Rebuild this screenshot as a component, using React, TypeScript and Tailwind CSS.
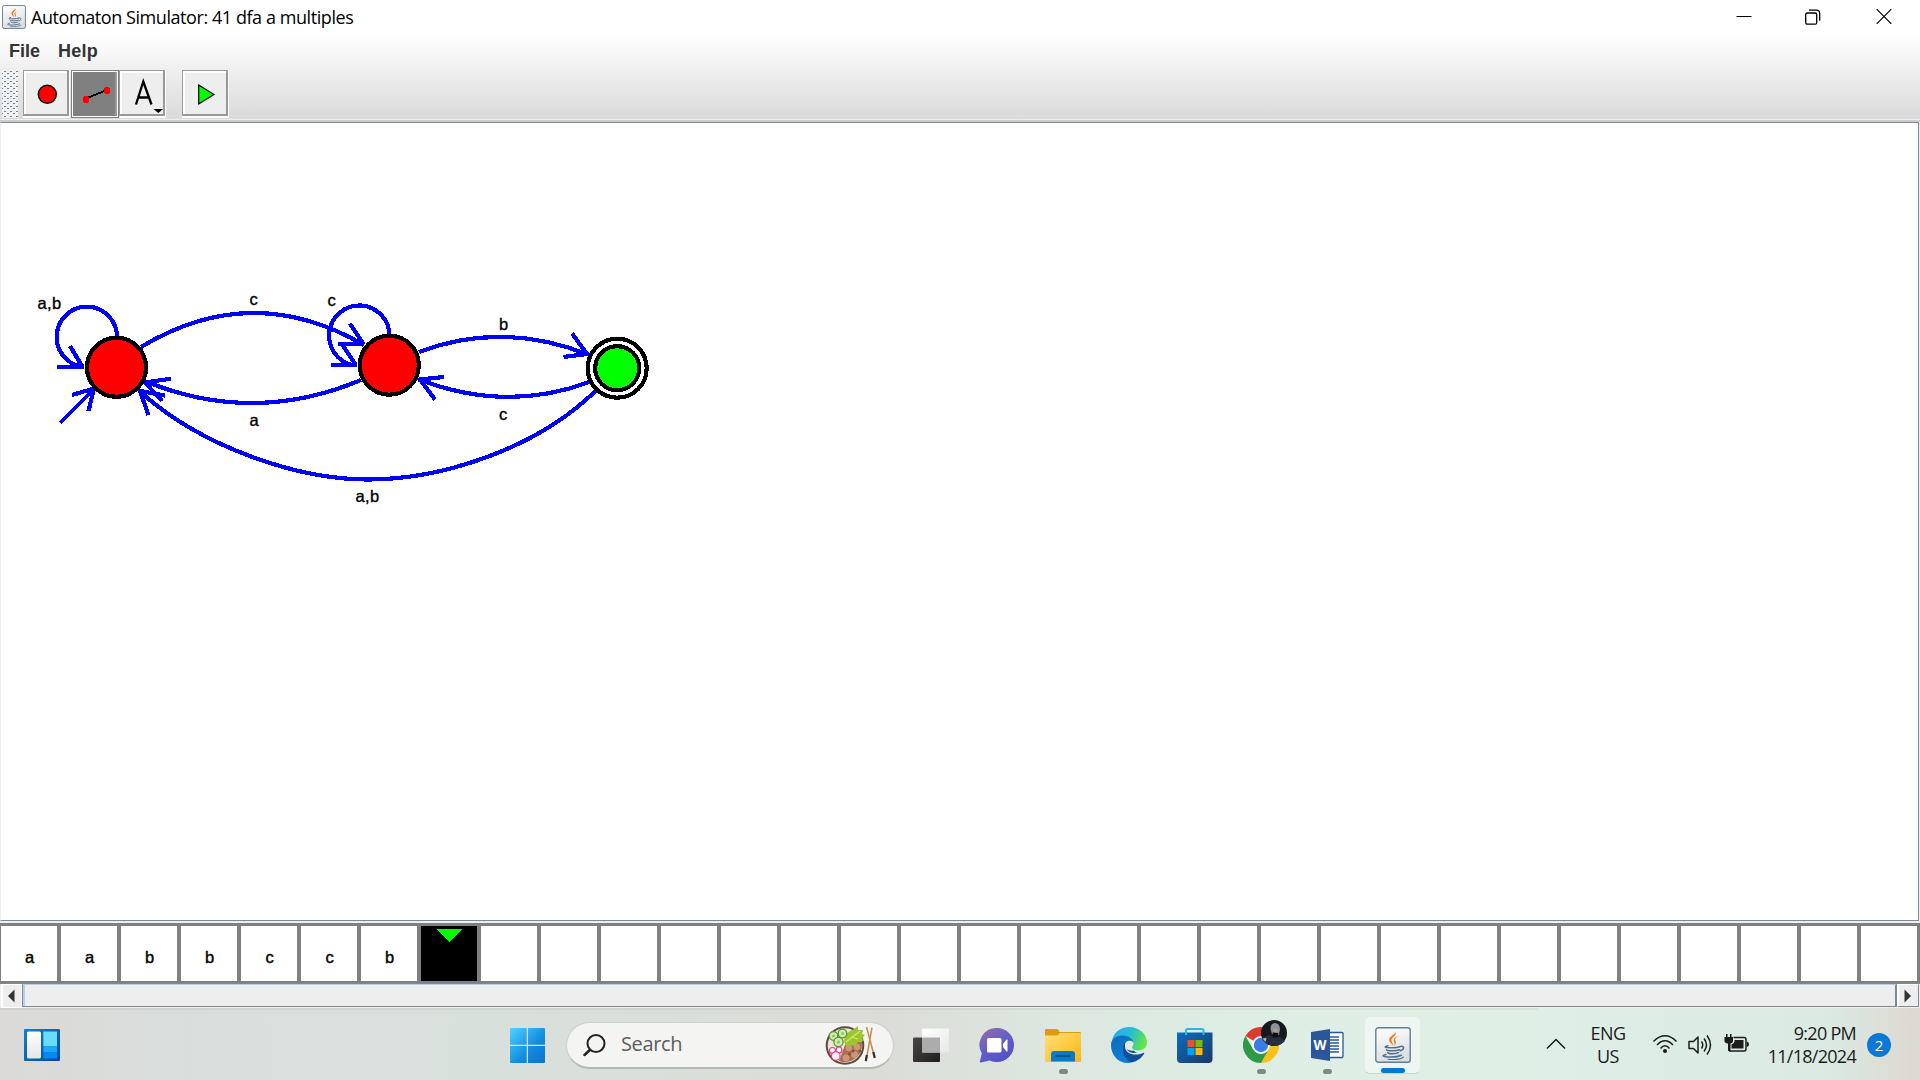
import React from "react";

const INK = "#0000ff";

function JavaCup({ className }: { className: string }) {
  return (
    <svg className={className} viewBox="0 0 36 36">
      <defs>
        <linearGradient id="javaBg" x1="0" y1="0" x2="0.3" y2="1">
          <stop offset="0" stopColor="#ffffff" />
          <stop offset="1" stopColor="#dcdee0" />
        </linearGradient>
      </defs>
      <rect x="0.8" y="0.8" width="34.4" height="34.4" rx="2.5" fill="url(#javaBg)" stroke="#5f7f96" strokeWidth="1.4" />
      <path d="M20.500 3.500c1.800 3.600-6.600 5.600-6.400 9.400.1 2.300 2.800 3.600 4.200 6.200-.4-3-1.900-4-1.800-6 .2-3.200 6-4.400 4-9.600z" fill="#ee7a1c" />
      <path d="M23.500 8.800c-3 1.200-5.200 2.800-4.800 4.800.3 1.600 1.700 2.400 .3 5 3-2.400 2-3.800 1.300-5.100-.8-1.600.8-3.200 3.200-4.700z" fill="#ee7a1c" />
      <g fill="none" stroke="#527089" strokeWidth="1.5" strokeLinecap="round">
        <path d="M13 18.800c-6 1.400-1.500 2.100 4.800 1.900 3-.1 5-.4 7-1" />
        <path d="M11.500 22.500c-.5 1.600 10 1.700 13.200.2" />
        <path d="M12.800 25.500c.3 1.700 8.500 1.500 10.700.2" />
        <path d="M11 27.400c-10 2.600 8.500 4 15.300.9" />
        <path d="M25 19.600c4.400-1.300 5 2.700.4 4.300" />
        <path d="M13 32.200c6 .6 12.500.1 15.200-2" strokeWidth="1.1" />
      </g>
    </svg>
  );
}

function TitleBar() {
  return (
    <div className="flex h-[34px] shrink-0 items-center bg-white">
      <JavaCup className="ml-[2px] h-[24px] w-[24px]" />
      <span className="ml-[5px] text-[18px] tracking-[-0.43px] text-black">Automaton Simulator: 41 dfa a multiples</span>
      <div className="ml-auto flex items-center pr-[28px]">
        <svg className="mr-[53px] h-[16px] w-[16px]" viewBox="0 0 16 16"><path d="M0.500 7.500H15.500" stroke="#000" strokeWidth="1" /></svg>
        <svg className="mr-[55px] h-[16px] w-[16px]" viewBox="0 0 16 16" fill="none" stroke="#000" strokeWidth="1.3">
          <rect x="0.7" y="4" width="11" height="11.2" rx="1.5" />
          <path d="M4 1.200h7.500q3.200 0 3.200 3.200v7.400" />
        </svg>
        <svg className="h-[16px] w-[16px]" viewBox="0 0 16 16"><path d="M0.700 0.200L15.300 14.800M15.300 0.200L0.700 14.800" stroke="#000" strokeWidth="1.2" /></svg>
      </div>
    </div>
  );
}

function ToolButton({ children }: { children: React.ReactNode }) {
  return (
    <div className="h-[48px] w-[47px] border-b-2 border-r-2 border-[#fbfbfb]">
      <div className="flex h-[46px] w-[46px] border border-b-2 border-r-2 border-[#999999] bg-[#eeeeee] shadow-[inset_2px_2px_0_#ffffff]">{children}</div>
    </div>
  );
}

function Toolbar() {
  return (
    <div className="flex h-[85px] shrink-0 flex-col bg-linear-to-b from-white to-[#dadada]">
      <div className="flex h-[36px] gap-[18px] pl-[9px] pt-[4px] font-['Liberation_Sans',sans-serif] text-[18px] font-bold leading-[27px] text-[#333333]">
        <span>File</span>
        <span className="tracking-[0.25px]">Help</span>
      </div>
      <div className="flex h-[48px] pl-[2px]">
        <svg className="h-[48px] w-[16px]" shapeRendering="crispEdges">
          <defs>
            <pattern id="grip" width="6" height="5" patternUnits="userSpaceOnUse">
              <rect width="6" height="5" fill="#f0f1f2" />
              <path d="M2 1h2v1h-2zM5 3h1v1h-1zM0 3h1v1h-1z" fill="#6f8396" />
              <path d="M3 2h1v1h-1zM1 4h1v1h-1z" fill="#ffffff" />
            </pattern>
          </defs>
          <rect width="16" height="48" fill="url(#grip)" />
        </svg>
        <div className="ml-[5px]">
          <ToolButton>
            <svg className="h-[43px] w-[43px]" viewBox="24 71 43 43"><circle cx="47.3" cy="94.3" r="9" fill="#f00" stroke="#000" strokeWidth="1.4" /></svg>
          </ToolButton>
        </div>
        <div className="ml-px h-[48px] w-[48px] border border-[#808080] bg-[#808080] shadow-[inset_1px_1px_0_#fff,inset_-1px_-1px_0_#fff]">
          <svg className="h-[46px] w-[46px]" viewBox="72 71 46 46" shapeRendering="crispEdges">
            <path d="M116 72V116" stroke="#999" strokeWidth="2" />
            <path d="M87 98L107 90" stroke="#000" strokeWidth="1.7" />
            <path d="M84 96h4v1h1v5h-1v1h-4v-1h-1v-5h1zM105 87h4v1h1v5h-1v1h-4v-1h-1v-5h1z" fill="#f00" />
          </svg>
        </div>
        <ToolButton>
          <svg className="h-[43px] w-[43px]" viewBox="120 71 43 43">
            <path d="M136 104.500L143.300 81.500L151.500 104.500M138.500 97.500H149" fill="none" stroke="#000" strokeWidth="2.3" />
            <path d="M153.500 109h9.500l-4.700 4z" fill="#000" />
          </svg>
        </ToolButton>
        <div className="ml-[16px]">
          <ToolButton>
            <svg className="h-[43px] w-[43px]" viewBox="183 71 43 43"><path d="M198.700 85L214 94.500L198.700 104z" fill="#0f0" stroke="#000" strokeWidth="1.2" /></svg>
          </ToolButton>
        </div>
      </div>
    </div>
  );
}

const edges = [
  "M117 337A30.2 30.2 0 1 0 81 366.5",
  "M57 367H84M70 346L82 366",
  "M60 423L94 389M72 395L94 388.5L88.5 411",
  "M141 347Q252 280 364 345",
  "M338 344H364M350 323.5L363 343.5",
  "M389.500 335A30.2 30.2 0 1 0 352 365",
  "M331 365H357M342 344L355 364",
  "M361 380Q254 425 147 382",
  "M171 378.7L145 382.5L162 401",
  "M595.500 391C535 450 440 479.500 368 479.500S200 446 140 391.500",
  "M165 395.5L140 391L148.5 415",
  "M419 352Q502 320.5 588 354.5",
  "M572 333.5L587 354L563.5 357",
  "M589 382Q507 413 419 379.5",
  "M444 377L420 379.5L435 399.5",
];

const labels: [string, number, number][] = [
  ["a,b", 37.5, 308.500],
  ["c", 249.5, 305],
  ["c", 327.5, 306],
  ["b", 499, 329.5],
  ["a", 249.5, 425.5],
  ["c", 499, 419.5],
  ["a,b", 355.500, 501.5],
];

function Diagram() {
  return (
    <div className="mr-px h-[799px] shrink-0 border border-b-[#7a8a99] border-l-[#eeeeee] border-r-[#7a8a99] border-t-[#7a8a99] bg-white">
      <svg className="h-[797px] w-[700px]" viewBox="1 123 700 797">
        <g shapeRendering="crispEdges">
          <g fill="none" stroke={INK} strokeWidth="4.2">
            {edges.map((d) => <path key={d} d={d} />)}
          </g>
          <g stroke="#000" strokeWidth="4.2">
            <circle cx="116.5" cy="367.3" r="29.5" fill="#f00" />
            <circle cx="389.3" cy="365.2" r="29.5" fill="#f00" />
            <circle cx="617.2" cy="368.2" r="29.5" fill="#fff" />
            <circle cx="617.2" cy="368.2" r="22" fill="#0f0" />
          </g>
        </g>
        <g fontFamily="Liberation Sans, sans-serif" fontSize="16.5" fill="#000" stroke="#000" strokeWidth="0.35">
          {labels.map(([t, x, y]) => <text key={`${x}-${y}`} x={x} y={y} letterSpacing={t.length > 1 ? 0.4 : 0}>{t}</text>)}
        </g>
      </svg>
    </div>
  );
}

const tape = ["a", "a", "b", "b", "c", "c", "b"];

function Tape() {
  return (
    <div className="flex h-[60px] shrink-0 gap-[4px] overflow-hidden bg-[#808080] pb-[2px] pl-px pt-[3px]">
      {Array.from({ length: 32 }, (_, i) => (
        <div key={i} className={`flex h-[55px] w-[56px] shrink-0 justify-center ${i === 7 ? "bg-black" : "bg-white"}`}>
          {i === 7 ? (
            <svg className="mt-[3px] h-[13px] w-[25px]" viewBox="0 0 25 13" shapeRendering="crispEdges"><path d="M0 0h25L12.500 13z" fill="#0f0" /></svg>
          ) : (
            <span className="pl-px pt-[22px] font-['Liberation_Sans',sans-serif] text-[16.5px] leading-[19px] text-black [-webkit-text-stroke:0.4px_black]">{tape[i]}</span>
          )}
        </div>
      ))}
    </div>
  );
}

function ScrollBar() {
  return (
    <div className="flex h-[25px] shrink-0 border-t border-[#7a8a99] bg-[#eeeeee] pr-px">
      <div className="ml-px flex h-[24px] w-[21px] items-center border border-white border-l-2 pl-[5px]">
        <svg className="h-[14px] w-[7px]" viewBox="0 0 7 14"><path d="M6.500 0.500v13L0 7z" fill="#333" /></svg>
      </div>
      <div className="mb-px h-[23px] grow border-b border-l border-r-2 border-t border-b-[#7a8a99] border-l-[#7a8a99] border-r-[#7a8a99] border-t-[#b8cfe5]">
        <div className="h-full w-[2px] bg-[#b8cfe5]" />
      </div>
      <div className="flex h-[23px] w-[22px] items-center border-b border-l-2 border-r border-t border-b-[#7a8a99] border-l-white border-r-[#7a8a99] border-t-white pl-[5px]">
        <svg className="h-[14px] w-[7px]" viewBox="0 0 7 14"><path d="M0.500 0.500v13L7 7z" fill="#333" /></svg>
      </div>
    </div>
  );
}

function WidgetsIcon() {
  return (
    <svg className="h-[34px] w-[36px]" viewBox="0 0 36 34">
      <defs>
        <linearGradient id="wd" x1="0" y1="0" x2="1" y2="1"><stop offset="0" stopColor="#0a82d8" /><stop offset="1" stopColor="#0e4790" /></linearGradient>
        <linearGradient id="ww" x1="0" y1="0" x2="0" y2="1"><stop offset="0" stopColor="#fff" /><stop offset="1" stopColor="#e6e6e6" /></linearGradient>
      </defs>
      <rect y="1" width="36" height="32" rx="1" fill="url(#wd)" />
      <rect x="3" y="3.5" width="14" height="27" rx="1.5" fill="url(#ww)" />
      <path d="M19.300 3.500h13.700v14.500h-13.700z" fill="#69dbff" />
      <path d="M19.300 18h13.700v6h-13.700z" fill="#1aa7f8" />
      <path d="M19.300 24h13.700v6.500h-13.700z" fill="#0589ee" />
    </svg>
  );
}

function StartIcon() {
  return (
    <svg className="h-[35px] w-[35px]" viewBox="0 0 35 35">
      <defs><linearGradient id="win" x1="0" y1="0" x2="1" y2="1"><stop offset="0" stopColor="#4fd3ff" /><stop offset="0.6" stopColor="#108ce0" /><stop offset="1" stopColor="#0a73cf" /></linearGradient></defs>
      <path d="M1 0h15.700v16.700H0V1q0-1 1-1zM18 0h16q1 0 1 1v15.700H18zM0 18h16.700v17H1q-1 0-1-1zM18 18h17v16q0 1-1 1H18z" fill="url(#win)" />
    </svg>
  );
}

function FoodIcon() {
  return (
    <svg className="h-[40px] w-[52px]" viewBox="0 0 52 40">
      <circle cx="20" cy="20.5" r="19.3" fill="#5c4a42" />
      <circle cx="20" cy="20.5" r="17.3" fill="#efe6da" />
      <path d="M20 20q8-6 17-3 1 12-9 18-8 4-14 1z" fill="#a9714f" />
      <g fill="#cc9777"><circle cx="24" cy="23" r="3.3" /><circle cx="32" cy="22" r="3.2" /><circle cx="29.500" cy="29.500" r="3.4" /><circle cx="21" cy="33" r="3.4" /></g>
      <g fill="#8d563d"><circle cx="28" cy="26" r="1.6" /><circle cx="24.500" cy="29" r="1.8" /><circle cx="35" cy="26" r="1.5" /></g>
      <path d="M19 16q0-6 6-10 4-1 8-5l0 4 5 0-1 4 3 1-3 3 2 3-6 1-3 4-5-1-4 1z" fill="#9dc52d" />
      <path d="M21 17L35 6M26 12l7 2" stroke="#d2e574" strokeWidth="1.2" />
      <g fill="#d5ebac" stroke="#4c9a2e" strokeWidth="1.3"><circle cx="8.5" cy="11" r="4.3" /><circle cx="17.5" cy="8.5" r="4.3" /><circle cx="13.5" cy="17" r="4.6" /></g>
      <g fill="#8fc46a"><circle cx="8.5" cy="11" r="1.5" /><circle cx="17.5" cy="8.5" r="1.5" /><circle cx="13.5" cy="17" r="1.6" /></g>
      <g fill="#fff2f7" stroke="#ec357c" strokeWidth="1.1"><circle cx="7.5" cy="25.5" r="3" /><circle cx="14" cy="25" r="3" /><circle cx="10.8" cy="31" r="4.3" /></g>
      <path d="M41.500 2L49.500 32M47 2.500L41 36" stroke="#c58c4c" strokeWidth="1.5" />
      <path d="M48.300 27l1.500 6M41.800 30l-1 6" stroke="#3c2c22" strokeWidth="2.2" />
    </svg>
  );
}

function SearchBox() {
  return (
    <div className="ml-[21px] flex h-[47px] w-[328px] items-center rounded-full border border-[#c9cfcb] border-b-2 border-b-[#b3bab6] bg-[#f4f4f2]">
      <svg className="ml-[16px] h-[24px] w-[24px]" viewBox="0 0 24 24" fill="none" stroke="#222" strokeLinecap="round"><circle cx="13" cy="10.5" r="8.5" strokeWidth="2" /><path d="M6.800 17L1.500 22" strokeWidth="2.5" /></svg>
      <span className="ml-[14px] pb-px text-[20px] tracking-[-0.35px] text-[#5c5c5c]">Search</span>
      <div className="ml-auto mr-[16px]"><FoodIcon /></div>
    </div>
  );
}

function TaskSlot({ children, dot }: { children: React.ReactNode; dot?: boolean }) {
  return (
    <div className="flex h-[48px] w-[66px] shrink-0 flex-col items-center">
      <div className="flex h-[36px] items-center">{children}</div>
      {dot && <div className="mt-[6px] h-[5px] w-[9px] rounded-full bg-[#7f8983]" />}
    </div>
  );
}

function TaskView() {
  return (
    <svg className="h-[36px] w-[36px]" viewBox="0 0 36 36">
      <defs>
        <linearGradient id="tv" x1="0" y1="0" x2="1" y2="1"><stop offset="0" stopColor="#494745" /><stop offset="1" stopColor="#1f1e1e" /></linearGradient>
        <linearGradient id="tw" x1="0" y1="0" x2="1" y2="1"><stop offset="0" stopColor="#ffffff" /><stop offset="1" stopColor="#e8e8e8" /></linearGradient>
      </defs>
      <rect x="0" y="10.5" width="27" height="24.5" rx="1" fill="url(#tv)" />
      <rect x="9" y="1.5" width="27" height="24" rx="1" fill="url(#tw)" />
      <path d="M9 10.500h18v15H9z" fill="#acacac" />
    </svg>
  );
}

function ChatIcon() {
  return (
    <svg className="h-[36px] w-[36px]" viewBox="0 0 36 36">
      <defs><linearGradient id="chat" x1="0" y1="0" x2="0.6" y2="1"><stop offset="0" stopColor="#9b6aa8" /><stop offset="0.5" stopColor="#6462c4" /><stop offset="1" stopColor="#5450cc" /></linearGradient></defs>
      <path d="M18 1a17 17 0 0 1 0 34q-4 0-7.500-1.500L2 35.500q-1.500 0-1-1.500l1.800-7.500A17 17 0 0 1 18 1z" fill="url(#chat)" />
      <rect x="8" y="11" width="14.5" height="14.5" rx="1.5" fill="#fff" />
      <path d="M24 17l3.500-4.500h1v12h-1L24 20z" fill="#fff" />
    </svg>
  );
}

function FolderIcon() {
  return (
    <svg className="h-[36px] w-[36px]" viewBox="0 0 36 36">
      <defs><linearGradient id="fold" x1="0" y1="0" x2="1" y2="1"><stop offset="0" stopColor="#ffdf79" /><stop offset="1" stopColor="#fbb612" /></linearGradient></defs>
      <path d="M0 3q0-1 1-1h11q1.500 0 2.500 3H35q1 0 1 1v5H0z" fill="#dc9c10" />
      <path d="M0 8.500h11q2 0 4-2.500h20q1 0 1 1v27q0 1-1 1H1q-1 0-1-1z" fill="url(#fold)" />
      <path d="M6 34.500V27q0-3 3-3h18q3 0 3 3v7.500z" fill="#087ac9" />
      <path d="M11 29h14" stroke="#07518f" strokeWidth="2" strokeLinecap="round" />
    </svg>
  );
}

function EdgeIcon() {
  return (
    <svg className="h-[36px] w-[36px]" viewBox="0 0 36 36">
      <defs>
        <linearGradient id="eg" x1="0" y1="0.2" x2="1" y2="0.5"><stop offset="0" stopColor="#2ba9ed" /><stop offset="0.5" stopColor="#26bdd6" /><stop offset="1" stopColor="#63e63f" /></linearGradient>
        <linearGradient id="eb" x1="0" y1="0" x2="0.5" y2="1"><stop offset="0" stopColor="#0c6cb7" /><stop offset="1" stopColor="#0f7fdc" /></linearGradient>
      </defs>
      <path d="M1 13C3 5 10 0 18 0c10 0 18 7 18 15.500 0 5-4 8-9 8-4 0-6-1.500-6-3 0-1 1.500-2 1.500-4.500C22.500 12 18 9 12 9 7 9 3 11 1 13z" fill="url(#eg)" />
      <path d="M0 18c0-6 5-9.500 11-9.500 6.500 0 11.500 3.500 11.500 7-4-4-9-1-9 4 0 7 6 12 14 10-3 4-7 6.500-11 6.500C7 36 0 28 0 18z" fill="url(#eb)" />
      <path d="M14.500 14.500C10 20 11 31 20 35.500c6-1 10-4 13-8.500.5-1 0-1.500-1-1-9 4-18.500 0-18-7 0-2 .5-3 .5-4.500z" fill="#114f96" />
      <path d="M14 18c0-3.500 5-5.500 8-2.500 1 3-1 3.500-1 5 0 1.500 1 2.500 2.500 3.300-4.500 1.700-9-1.300-9.500-5.800z" fill="#deeae3" />
      <path d="M15.500 22c2 4 7 4.500 11 3.500-2-.3-3-.8-4-2-2 .5-5 0-7-1.500z" fill="#114f96" />
    </svg>
  );
}

function StoreIcon() {
  return (
    <svg className="h-[36px] w-[36px]" viewBox="0 0 36 36">
      <defs><linearGradient id="st" x1="0" y1="0" x2="1" y2="1"><stop offset="0" stopColor="#0b6dbf" /><stop offset="1" stopColor="#1b3967" /></linearGradient></defs>
      <path d="M0 5.500h35.500V32q0 4-4 4H4q-4 0-4-4z" fill="url(#st)" />
      <path d="M9 8V3.500q0-1.500 1.500-1.500h14.500q1.500 0 1.500 1.500V8" fill="none" stroke="#22b8f0" strokeWidth="2" />
      <path d="M10.500 13h7v7h-7z" fill="#f25022" /><path d="M18.500 13h7v7h-7z" fill="#7fba00" />
      <path d="M10.500 21h7v7h-7z" fill="#00a4ef" /><path d="M18.500 21h7v7h-7z" fill="#ffb900" />
    </svg>
  );
}

function ChromeIcon() {
  return (
    <div className="relative h-[36px] w-[36px]">
      <svg className="h-[36px] w-[36px]" viewBox="0 0 36 36">
        <path d="M18 18L2.400 9A18 18 0 0 1 33.600 9z" fill="#dc3c30" />
        <path d="M18 9H33.600A18 18 0 0 1 18 36L25.800 22.500z" fill="#fbc116" />
        <path d="M2.400 9A18 18 0 0 0 18 36L25.800 22.500L10.200 22.500z" fill="#2c9a48" />
        <circle cx="18" cy="18" r="9" fill="#fff" /><circle cx="18" cy="18" r="7.2" fill="#3a7de8" />
      </svg>
      <svg className="absolute left-[18px] top-[-7px] h-[26px] w-[26px]" viewBox="0 0 26 26">
        <circle cx="13" cy="13" r="13" fill="#15181d" />
        <path d="M9.500 9q0-6 4.500-6t5 6l-1 6-7-1z" fill="#8a929a" />
        <path d="M12 8.500l5 .5-.5 3-4-.5z" fill="#b49a86" />
        <path d="M11.500 12.500l6 .5-1 4h-4z" fill="#0d0f12" />
        <path d="M1 18l7-3 5 3 6-1 5 4q-5 5-11 5-8-1-12-8z" fill="#252f3d" />
        <path d="M1.500 18.500l3 3.500 1-4z" fill="#c5b9ad" />
      </svg>
    </div>
  );
}

function WordIcon() {
  return (
    <svg className="h-[36px] w-[36px]" viewBox="0 0 36 36">
      <rect x="15" y="5.5" width="19" height="25" rx="1" fill="#fff" stroke="#2b579a" strokeWidth="1.3" />
      <path d="M19 10h11M19 13h11M19 16h11M19 19h11M19 22h11M19 25h11" stroke="#2b579a" strokeWidth="1.3" />
      <path d="M2 5L21 2V34L2 31z" fill="#2b579a" />
      <text x="4.5" y="23" textLength="13" lengthAdjust="spacingAndGlyphs" fontFamily="Open Sans, sans-serif" fontWeight="700" fontSize="15" fill="#fff">W</text>
    </svg>
  );
}

function Tray() {
  return (
    <div className="ml-auto flex items-center text-[#1b1b1b]">
      <svg className="mt-[-2px] h-[12px] w-[20px]" viewBox="0 0 20 12"><path d="M1 10.500L10 1.500L19 10.500" fill="none" stroke="currentColor" strokeWidth="1.5" /></svg>
      <div className="ml-[22px] w-[40px] text-center text-[18px] leading-[23px] tracking-[-0.6px]">ENG<br />US</div>
      <svg className="ml-[24px] mt-[-2px] h-[20px] w-[26px]" viewBox="0 0 26 20" fill="none" stroke="currentColor" strokeWidth="1.5">
        <path d="M1.500 7.500Q13-4 24.500 7.500M5 11Q13 2.500 21 11M8.500 14.500Q13 9 17.500 14.500" /><circle cx="13" cy="17" r="2" fill="currentColor" stroke="none" />
      </svg>
      <svg className="ml-[10px] mt-[-1px] h-[22px] w-[25px]" viewBox="0 0 25 22" fill="none" stroke="currentColor" strokeWidth="1.5">
        <path d="M1 7.500h4.500L10 3v16L5.500 14.500H1z" strokeLinejoin="round" /><path d="M13.500 7.500q2.500 3.500 0 7M16 4.500q5 6.500 0 13M19 1.500q7 9.500 0 19" />
      </svg>
      <svg className="ml-[11px] mt-[-2px] h-[20px] w-[25px]" viewBox="0 0 25 20">
        <path d="M2 0h1.500v3H6V0h1.500v3H9v4q0 2-2.500 2.500V17H4V9.500Q.5 9 .5 7V3H2z" fill="currentColor" />
        <path d="M9.500 3.500H20q2 0 2 2V15q0 2-2 2H5" fill="none" stroke="currentColor" strokeWidth="1.5" />
        <path d="M10.500 6H19.500v8.500H7.500V10.500q3-1.500 3-3zM23 7.500q2 .5 2 2.700T23 13z" fill="currentColor" />
      </svg>
      <div className="ml-[17px] w-[90px] whitespace-nowrap text-right text-[18px] leading-[23px] tracking-[-0.72px]">9:20 PM<br />11/18/2024</div>
      <div className="ml-[11px] mr-[29px] flex h-[24px] w-[24px] items-center justify-center rounded-full bg-[#0a78d4] text-[15px] text-white">2</div>
    </div>
  );
}

function Taskbar() {
  return (
    <div className="flex h-[72px] flex-col bg-[linear-gradient(to_right,#dbdad8_0px,#d9dfdd_220px,#d8e0dc_500px,#dcdcd7_880px,#dce7e0_1050px,#deeee5_1250px,#e0efe4_1450px,#deefe7_1560px,#dbe9e3_1830px,#dddad2_1910px)]">
      <div className="h-[2px] w-[1538px] shrink-0 bg-black/5" />
      <div className="flex h-[70px] items-center">
        <div className="ml-[24px]"><WidgetsIcon /></div>
        <div className="ml-[450px]"><StartIcon /></div>
        <SearchBox />
        <div className="flex h-[37px] pl-[4px]">
          <TaskSlot><TaskView /></TaskSlot>
          <TaskSlot><ChatIcon /></TaskSlot>
          <TaskSlot dot><FolderIcon /></TaskSlot>
          <TaskSlot><EdgeIcon /></TaskSlot>
          <TaskSlot><StoreIcon /></TaskSlot>
          <TaskSlot dot><ChromeIcon /></TaskSlot>
          <TaskSlot dot><WordIcon /></TaskSlot>
        </div>
        <div className="ml-[4px] flex h-[58px] w-[57px] flex-col items-center rounded-[6px] border border-[#e4ece7] border-b-[#cbd6cf] bg-[#eff5f1]">
          <JavaCup className="mt-[10px] h-[36px] w-[36px] shrink-0" />
          <div className="mt-[5px] h-[5px] w-[24px] shrink-0 rounded-full bg-[#0078d4]" />
        </div>
        <Tray />
      </div>
    </div>
  );
}

export default function App() {
  return (
    <div className="flex h-[1080px] w-[1920px] flex-col overflow-hidden bg-[#eeeeee] font-['Open_Sans','Noto_Sans',sans-serif]">
      <TitleBar />
      <Toolbar />
      <div className="h-[3px] shrink-0 border-b-2 border-[#cccccc] bg-[#eeeeee]" />
      <Diagram />
      <div className="h-[2px] shrink-0 bg-[#eeeeee]" />
      <Tape />
      <ScrollBar />
      <Taskbar />
    </div>
  );
}
